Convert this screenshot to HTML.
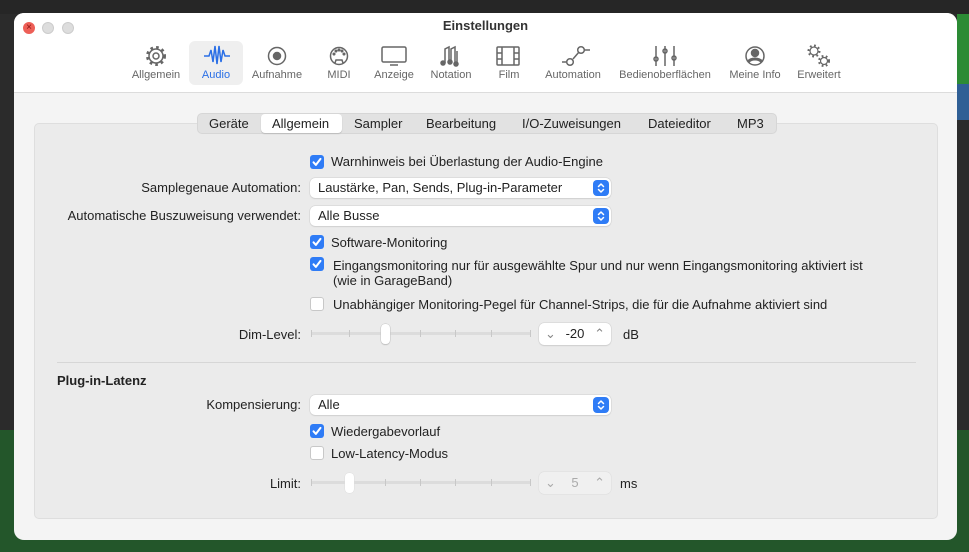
<!DOCTYPE html>
<html><head><meta charset="utf-8"><style>
*{box-sizing:border-box;margin:0;padding:0}
body{width:969px;height:552px;overflow:hidden;background:#2b2b2b;font-family:"Liberation Sans",sans-serif;font-size:13px;color:#222;position:relative}
.a{position:absolute}
.win{left:14px;top:13px;width:943px;height:527px;background:#f4f4f4;border-radius:10px;overflow:hidden}
.tb{left:0;top:0;width:943px;height:80px;background:#fff;border-bottom:1px solid #dcdcdc}
.lbl{font-size:11px;color:#666;text-align:center;width:110px}
.grp{left:20px;top:110px;width:904px;height:396px;background:#ebebeb;border:1px solid #dedede;border-radius:5px}
.r{text-align:right;width:300px}
.cb{width:14px;height:14px;border-radius:3px;background:#2f7cf6}
.cb svg{position:absolute;left:0;top:0}
.cb.off{background:#fff;border:1px solid #c8c8c8}
.pop{height:20px;width:301px;background:#fff;border-radius:5px;box-shadow:0 0 0 .5px #cfcfcf,0 1px 1px #d0d0d0;padding:2px 8px}
.pb{right:2px;top:2px;width:16px;height:16px;background:#2f7cf6;border-radius:4px}
.sl{height:3px;background:#dcdcdc;border-radius:2px}
.tk{width:1px;height:7px;background:#c8c8c8}
.th{width:9px;height:20px;background:#fff;border-radius:4px;box-shadow:0 0 0 .5px #c4c4c4,0 1px 1px #bbb}
.st{width:72px;height:22px;background:#fff;border-radius:5px;box-shadow:0 0 0 .5px #cfcfcf,0 1px 1px #ccc;text-align:center;line-height:22px}
</style></head><body>
<div class="a" style="left:0;top:0;width:969px;height:14px;background:#262626"></div>
<div class="a" style="left:957px;top:14px;width:12px;height:70px;background:#2c8b35"></div>
<div class="a" style="left:957px;top:84px;width:12px;height:36px;background:#2f5f95"></div>
<div class="a" style="left:0;top:430px;width:969px;height:122px;background:#23562a"></div>
<div class="a win">
 <div class="a tb">
  <div class="a" style="left:9px;top:9px;width:12px;height:12px;border-radius:6px;background:#ed5f57;color:#8a1010;font-size:10px;line-height:12px;text-align:center">×</div>
  <div class="a" style="left:28px;top:9px;width:12px;height:12px;border-radius:6px;background:#ddd;border:1px solid #ccc"></div>
  <div class="a" style="left:48px;top:9px;width:12px;height:12px;border-radius:6px;background:#ddd;border:1px solid #ccc"></div>
  <div class="a" style="left:0;top:5px;width:943px;text-align:center;font-weight:bold;font-size:13px;color:#333">Einstellungen</div>
  <div class="a" style="left:175px;top:28px;width:54px;height:44px;background:#efefef;border-radius:6px"></div>
  <svg class="a" style="left:0;top:30px" width="943" height="26" fill="none" stroke="#666" stroke-width="1.5">
   <circle cx="142" cy="13" r="3"/><circle cx="142" cy="13" r="7"/><circle cx="142" cy="13" r="8.5" stroke-width="3" stroke-dasharray="2.6 3.1"/>
   <path d="M190 13h5l2-6 2 12 2-16 2 18 2-18 2 16 2-12 2 6h5" stroke="#2a6fe6"/>
   <circle cx="263" cy="13" r="8.5"/><circle cx="263" cy="13" r="3.5" fill="#666"/>
   <circle cx="325" cy="13" r="8.5"/><path d="M321 20l1-3h6l1 3"/><circle cx="320" cy="11" r=".8" fill="#666"/><circle cx="322" cy="8" r=".8" fill="#666"/><circle cx="325" cy="7" r=".8" fill="#666"/><circle cx="328" cy="8" r=".8" fill="#666"/><circle cx="330" cy="11" r=".8" fill="#666"/>
   <rect x="368" y="4" width="24" height="15" rx="1.5"/><path d="M376 22h8"/>
   <path d="M431 20V6l4-2v14M437 20V6l4-2v16M443 20V8"/><circle cx="429" cy="20" r="2" fill="#666"/><circle cx="436" cy="19" r="2" fill="#666"/><circle cx="442" cy="21" r="2" fill="#666"/>
   <rect x="483" y="4" width="22" height="18" rx="1"/><path d="M488 4v18M500 4v18M483 10h5M483 16h5M500 10h5M500 16h5"/>
   <path d="M548 19h4M559 16l6-7M570 7h6"/><circle cx="556" cy="19" r="3.3"/><circle cx="567" cy="7" r="3.3"/>
   <path d="M642 3v20M651 3v20M660 3v20"/><circle cx="642" cy="16" r="2"/><circle cx="651" cy="8" r="2"/><circle cx="660" cy="15" r="2"/>
   <circle cx="741" cy="13" r="9"/><circle cx="741" cy="10" r="3.5" fill="#666"/><path d="M734 19c3-4 11-4 14 0" stroke-width="3"/>
   <circle cx="800" cy="8" r="4" stroke-width="1.2"/><circle cx="800" cy="8" r="5.5" stroke-width="2" stroke-dasharray="1.8 2.5"/><circle cx="810" cy="18" r="3.5" stroke-width="1.2"/><circle cx="810" cy="18" r="5" stroke-width="2" stroke-dasharray="1.8 2.4"/>
  </svg>
  <div class="a lbl" style="left:87px;top:56px">Allgemein</div>
  <div class="a lbl" style="left:147px;top:56px;color:#2a6fe6">Audio</div>
  <div class="a lbl" style="left:208px;top:56px">Aufnahme</div>
  <div class="a lbl" style="left:270px;top:56px">MIDI</div>
  <div class="a lbl" style="left:325px;top:56px">Anzeige</div>
  <div class="a lbl" style="left:382px;top:56px">Notation</div>
  <div class="a lbl" style="left:440px;top:56px">Film</div>
  <div class="a lbl" style="left:504px;top:56px">Automation</div>
  <div class="a lbl" style="left:596px;top:56px">Bedienoberflächen</div>
  <div class="a lbl" style="left:686px;top:56px">Meine Info</div>
  <div class="a lbl" style="left:750px;top:56px">Erweitert</div>
 </div>
 <div class="a grp"></div>
 <div class="a" style="left:183px;top:100px;width:580px;height:21px;background:#e2e2e2;border-radius:5px;border:1px solid #d6d6d6"></div>
 <div class="a" style="left:247px;top:101px;width:81px;height:19px;background:#fff;border-radius:4px;box-shadow:0 1px 1px #bbb"></div>
 <div class="a" style="left:183px;top:103px;width:580px;font-size:13px;white-space:nowrap">
  <span class="a" style="left:12px">Geräte</span><span class="a" style="left:75px">Allgemein</span><span class="a" style="left:157px">Sampler</span><span class="a" style="left:229px">Bearbeitung</span><span class="a" style="left:325px">I/O-Zuweisungen</span><span class="a" style="left:451px">Dateieditor</span><span class="a" style="left:540px">MP3</span>
 </div>
</div>
<svg width="0" height="0" style="position:absolute"><defs><symbol id="ck" viewBox="0 0 14 14"><path d="M3.5 7.3l2.4 2.6 4.6-6" fill="none" stroke="#fff" stroke-width="2" stroke-linecap="round" stroke-linejoin="round"/></symbol><symbol id="ar" viewBox="0 0 16 16"><path d="M5.5 6.5L8 4l2.5 2.5M5.5 9.5L8 12l2.5-2.5" fill="none" stroke="#fff" stroke-width="1.5" stroke-linecap="round" stroke-linejoin="round"/></symbol></defs></svg>
<div class="a cb" style="left:310px;top:155px"><svg width="14" height="14"><use href="#ck"/></svg></div><div class="a" style="left:331px;top:154px">Warnhinweis bei Überlastung der Audio-Engine</div>
<div class="a r" style="left:1px;top:180px">Samplegenaue Automation:</div>
<div class="a pop" style="left:310px;top:178px">Laustärke, Pan, Sends, Plug-in-Parameter<div class="a pb"><svg width="16" height="16"><use href="#ar"/></svg></div></div>
<div class="a r" style="left:1px;top:208px">Automatische Buszuweisung verwendet:</div>
<div class="a pop" style="left:310px;top:206px">Alle Busse<div class="a pb"><svg width="16" height="16"><use href="#ar"/></svg></div></div>
<div class="a cb" style="left:310px;top:235px"><svg width="14" height="14"><use href="#ck"/></svg></div><div class="a" style="left:331px;top:235px">Software-Monitoring</div>
<div class="a cb" style="left:310px;top:257px"><svg width="14" height="14"><use href="#ck"/></svg></div><div class="a" style="left:333px;top:258px;line-height:15px">Eingangsmonitoring nur für ausgewählte Spur und nur wenn Eingangsmonitoring aktiviert ist<br>(wie in GarageBand)</div>
<div class="a cb off" style="left:310px;top:297px"></div><div class="a" style="left:333px;top:297px">Unabhängiger Monitoring-Pegel für Channel-Strips, die für die Aufnahme aktiviert sind</div>
<div class="a r" style="left:1px;top:327px">Dim-Level:</div>
<div class="a sl" style="left:311px;top:332px;width:220px"></div>
<div class="a tk" style="left:311px;top:330px"></div><div class="a tk" style="left:349px;top:330px"></div><div class="a tk" style="left:420px;top:330px"></div><div class="a tk" style="left:455px;top:330px"></div><div class="a tk" style="left:491px;top:330px"></div><div class="a tk" style="left:530px;top:330px"></div>
<div class="a th" style="left:381px;top:324px"></div>
<div class="a st" style="left:539px;top:323px">-20<span class="a" style="left:6px;color:#888">⌄</span><span class="a" style="right:6px;color:#888">⌃</span></div>
<div class="a" style="left:623px;top:327px">dB</div>
<div class="a" style="left:57px;top:362px;width:859px;height:1px;background:#d6d6d6"></div>
<div class="a" style="left:57px;top:373px;font-weight:bold">Plug-in-Latenz</div>
<div class="a r" style="left:1px;top:397px">Kompensierung:</div>
<div class="a pop" style="left:310px;top:395px">Alle<div class="a pb"><svg width="16" height="16"><use href="#ar"/></svg></div></div>
<div class="a cb" style="left:310px;top:424px"><svg width="14" height="14"><use href="#ck"/></svg></div><div class="a" style="left:331px;top:424px">Wiedergabevorlauf</div>
<div class="a cb off" style="left:310px;top:446px"></div><div class="a" style="left:331px;top:446px">Low-Latency-Modus</div>
<div class="a r" style="left:1px;top:476px">Limit:</div>
<div class="a sl" style="left:311px;top:481px;width:220px"></div>
<div class="a tk" style="left:311px;top:479px"></div><div class="a tk" style="left:385px;top:479px"></div><div class="a tk" style="left:420px;top:479px"></div><div class="a tk" style="left:455px;top:479px"></div><div class="a tk" style="left:491px;top:479px"></div><div class="a tk" style="left:530px;top:479px"></div>
<div class="a th" style="left:345px;top:473px;box-shadow:0 0 0 .5px #ddd"></div>
<div class="a st" style="left:539px;top:472px;color:#aaa;background:#f0f0f0;box-shadow:0 0 0 .5px #ddd">5<span class="a" style="left:6px">⌄</span><span class="a" style="right:6px">⌃</span></div>
<div class="a" style="left:620px;top:476px">ms</div>
</body></html>
